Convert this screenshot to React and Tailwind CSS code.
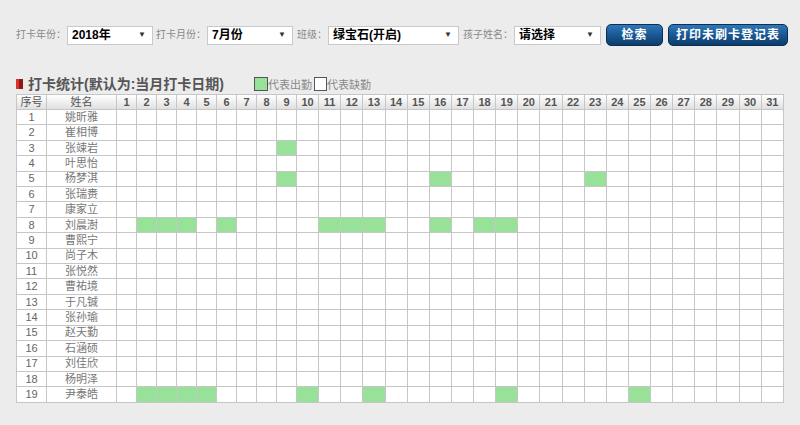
import React from 'react';

const FONT = { fontFamily: '"Liberation Sans", "Noto Sans CJK SC", sans-serif' };

const names = [
  '姚昕雅', '崔相博', '张竦岩', '叶思怡', '杨梦淇', '张瑞赉', '康家立', '刘晨澍', '曹熙宁', '尚子木',
  '张悦然', '曹祐境', '于凡铖', '张孙瑜', '赵天勤', '石涵硕', '刘佳欣', '杨明泽', '尹泰皓',
];

// 出勤的日期
const present = {
  3: [9],
  5: [9, 16, 23],
  8: [2, 3, 4, 6, 11, 12, 13, 16, 18, 19],
  19: [2, 3, 4, 5, 10, 13, 19, 25],
};

const days = Array.from({ length: 31 }, (_, i) => i + 1);

const Select = ({ value, width }) => (
  <div className={`${width} shrink-0 h-[19px] bg-white border border-[#c9c9c9] flex items-center justify-between pl-[4px] pr-[6px]`}>
    <span className="text-[12px] text-black font-bold leading-none whitespace-nowrap">{value}</span>
    <span className="text-[8px] text-[#333] leading-none">▼</span>
  </div>
);

const Label = ({ children, className = '' }) => (
  <span className={`shrink-0 whitespace-nowrap text-[10px] text-[#888] mr-[1px] leading-none ${className}`}>{children}</span>
);

const BlueButton = ({ children, width }) => (
  <button className={`${width} shrink-0 whitespace-nowrap h-[22px] rounded-[5px] border border-[#0b2f55] bg-gradient-to-b from-[#2f77b8] via-[#195893] to-[#0e3c6a] text-white text-[12px] font-bold tracking-[1px] leading-none`}>
    {children}
  </button>
);

const App = () => {
  return (
    <div className="w-[800px] h-[425px] bg-[#ececec] pt-[24px] px-[16px]" style={FONT}>
      <div className="flex items-center h-[22px]">
        <Label>打卡年份：</Label>
        <Select value="2018年" width="w-[86px]" />
        <Label className="ml-[3px]">打卡月份：</Label>
        <Select value="7月份" width="w-[86px]" />
        <Label className="ml-[4px]">班级：</Label>
        <Select value="绿宝石(开启)" width="w-[131px]" />
        <Label className="ml-[4px]">孩子姓名：</Label>
        <Select value="请选择" width="w-[87px]" />
        <div className="ml-[5px] flex gap-[5px] shrink-0">
          <BlueButton width="w-[57px]">检索</BlueButton>
          <BlueButton width="w-[120px]">打印未刷卡登记表</BlueButton>
        </div>
      </div>

      <div className="mt-[28px] flex items-end h-[17px]">
        <div className="flex w-[7px] h-[10px] mb-[2px]">
          <div className="w-[3px] bg-[#e0302a]" />
          <div className="w-[4px] bg-[#8c1a16]" />
        </div>
        <span className="ml-[5px] text-[14px] font-bold text-[#555] leading-none">打卡统计(默认为:当月打卡日期)</span>
        <div className="ml-[30px] w-[14px] h-[14px] border border-[#555] bg-[#98e198]" />
        <span className="text-[11px] text-[#888] leading-none">代表出勤</span>
        <div className="ml-[2px] w-[13px] h-[14px] border border-[#555] bg-white" />
        <span className="text-[11px] text-[#888] leading-none">代表缺勤</span>
      </div>

      <table className="mt-[3px] w-[768px] table-fixed border-collapse bg-white">
        <colgroup>
          <col className="w-[30px]" />
          <col className="w-[70px]" />
          {days.map((d) => (
            <col key={d} className={d < 10 ? 'w-[20px]' : ''} />
          ))}
        </colgroup>
        <thead>
          <tr className="h-[15px] bg-gradient-to-b from-white to-[#dedede]">
            <th className="border border-[#c6c6c6] text-[11px] font-normal text-[#555] leading-none p-0">序号</th>
            <th className="border border-[#c6c6c6] text-[11px] font-normal text-[#555] leading-none p-0">姓名</th>
            {days.map((d) => (
              <th key={d} className="border border-[#c6c6c6] text-[11px] font-bold text-[#555] leading-none p-0">{d}</th>
            ))}
          </tr>
        </thead>
        <tbody>
          {names.map((name, i) => {
            const row = i + 1;
            const marks = present[row] || [];
            return (
              <tr key={row} className="h-[15.42px]">
                <td className="border border-[#c6c6c6] text-center text-[11px] text-[#666] leading-none p-0">{row}</td>
                <td className="border border-[#c6c6c6] text-center text-[11px] text-[#777] leading-none p-0">{name}</td>
                {days.map((d) => (
                  <td
                    key={d}
                    className={`border border-[#c6c6c6] p-0 ${marks.includes(d) ? 'bg-[#98e198]' : ''}`}
                  />
                ))}
              </tr>
            );
          })}
        </tbody>
      </table>
    </div>
  );
};

export default App;
